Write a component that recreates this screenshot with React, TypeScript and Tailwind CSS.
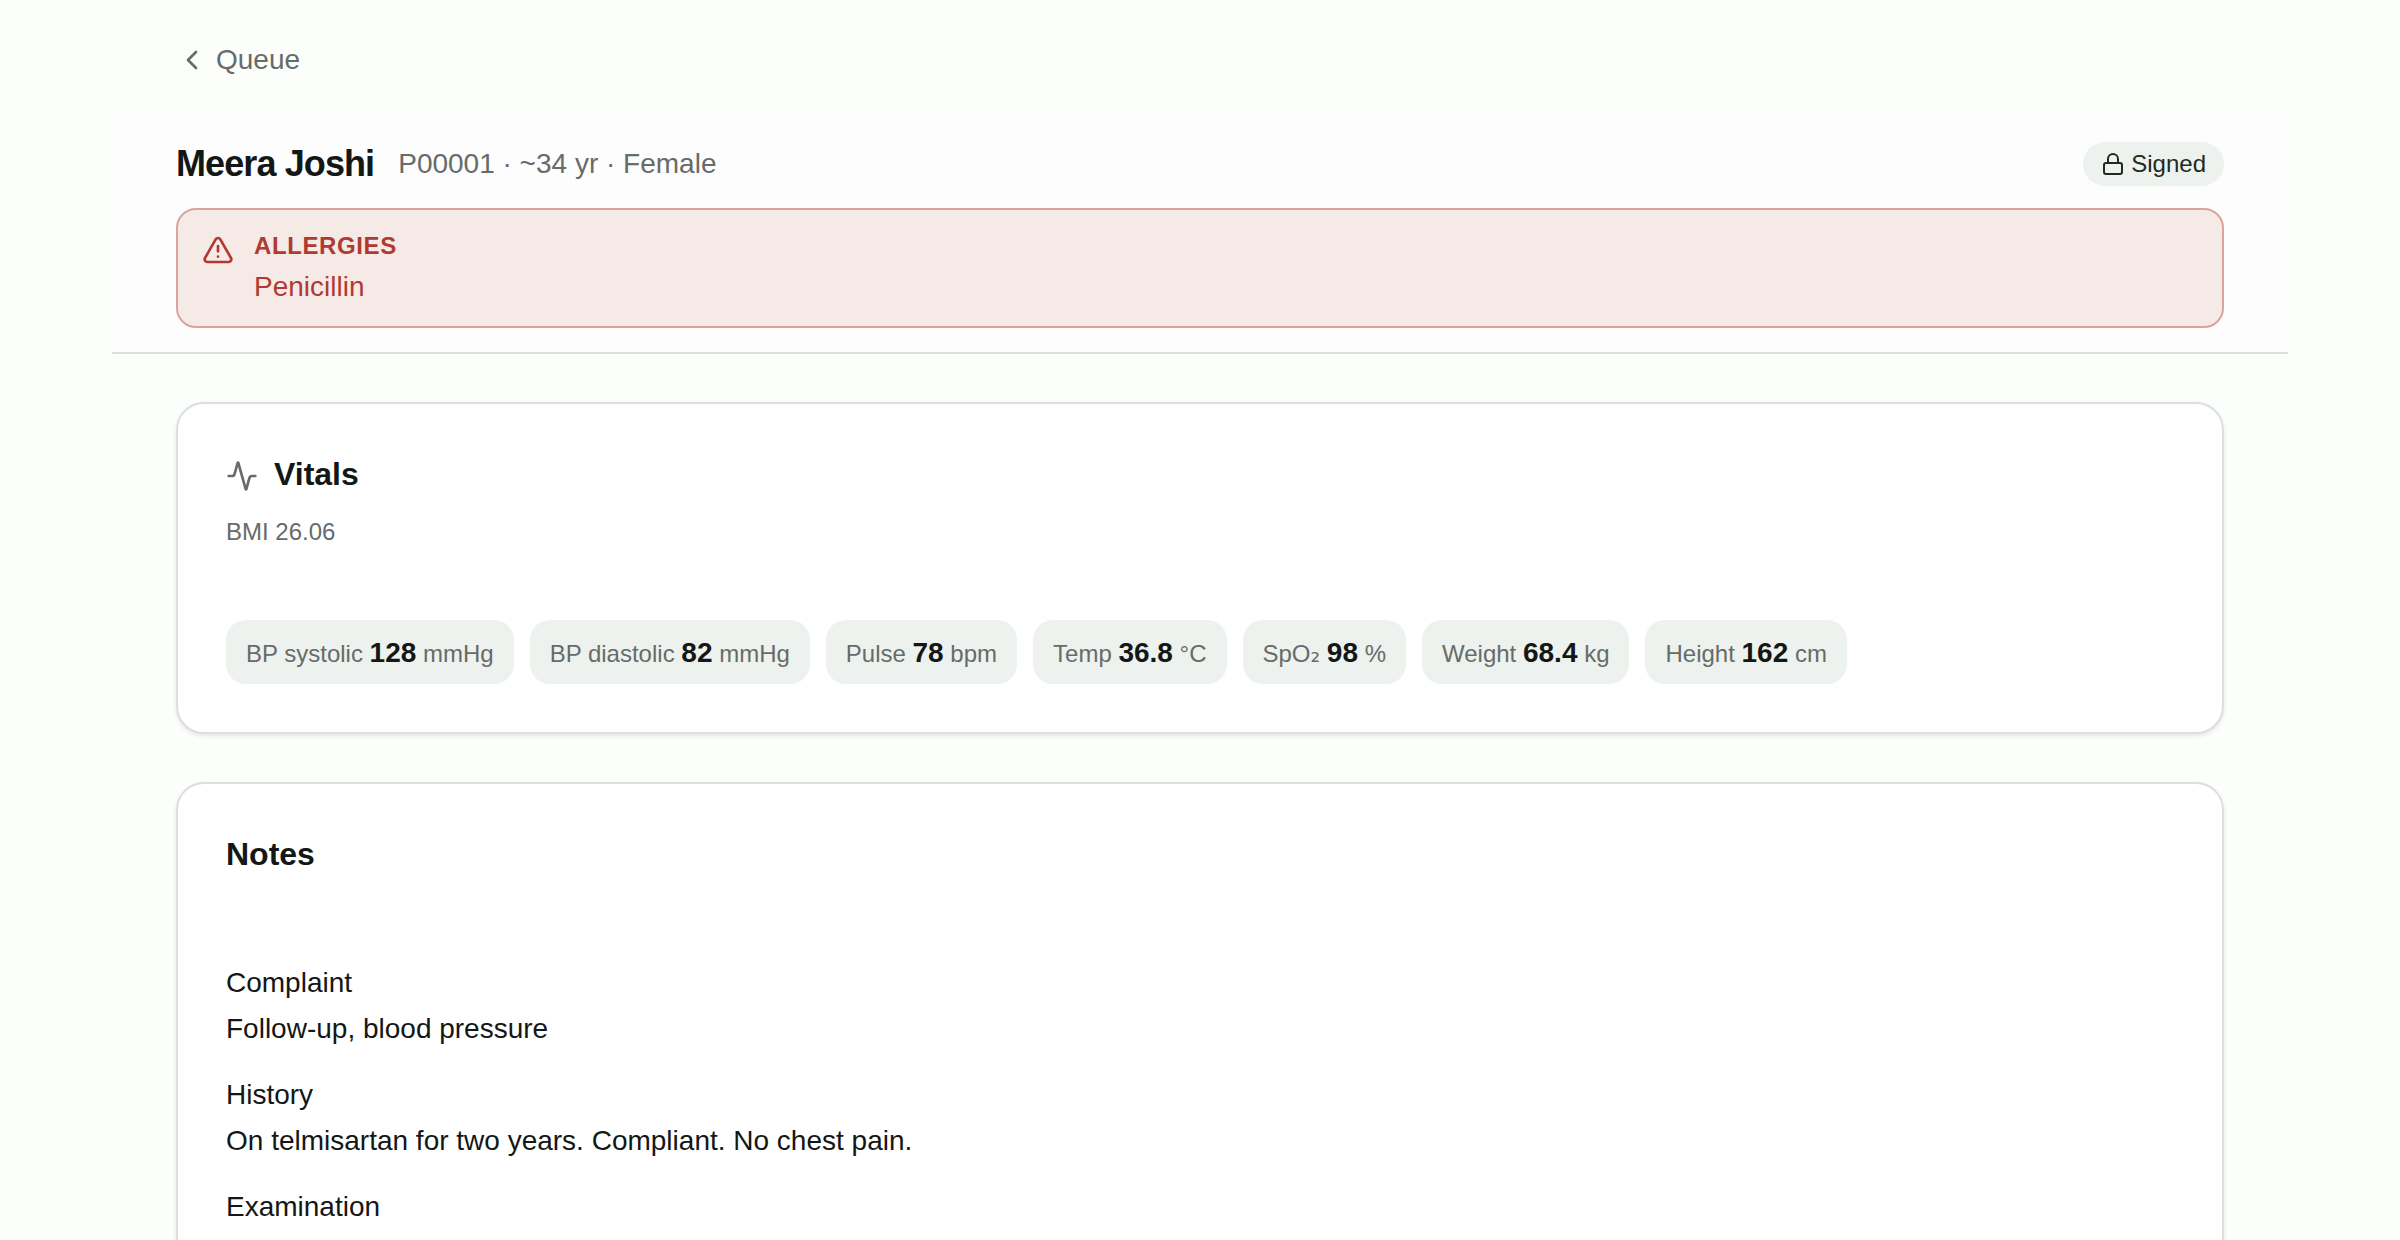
import type { ReactNode } from "react";
import { Activity, ChevronLeft, Lock, TriangleAlert } from "lucide-react";

type Vital = { id: string; label: ReactNode; value: string; unit: string };

const vitals: Vital[] = [
  { id: "systolic", label: "BP systolic", value: "128", unit: "mmHg" },
  { id: "diastolic", label: "BP diastolic", value: "82", unit: "mmHg" },
  { id: "pulse", label: "Pulse", value: "78", unit: "bpm" },
  { id: "temp", label: "Temp", value: "36.8", unit: "°C" },
  {
    id: "spo2",
    label: <>SpO<span className="font-['DejaVu_Sans',sans-serif]">₂</span></>,
    value: "98",
    unit: "%",
  },
  { id: "weight", label: "Weight", value: "68.4", unit: "kg" },
  { id: "height", label: "Height", value: "162", unit: "cm" },
];

const notes = [
  { label: "Complaint", text: "Follow-up, blood pressure" },
  { label: "History", text: "On telmisartan for two years. Compliant. No chest pain." },
  { label: "Examination", text: "" },
];

function Card({ children }: { children: ReactNode }) {
  return (
    <section className="rounded-[28px] border-2 border-[#dcdfdd] bg-white p-12 shadow-[0_2px_4px_rgba(0,0,0,0.1)]">
      {children}
    </section>
  );
}

export default function App() {
  return (
    <div className="h-screen overflow-hidden bg-[#fcfefb] font-['Liberation_Sans',sans-serif] text-[28px] leading-[42px] text-[#131715]">
      <main className="mx-auto max-w-[2176px] px-16 pt-6">
        <nav className="mb-4 flex">
          <a href="#queue" className="flex h-[72px] items-center gap-2 text-[#676b69]">
            <ChevronLeft className="size-8" />
            Queue
          </a>
        </nav>

        <header className="-mx-16 border-b-2 border-[#dcdfdd] bg-[#fdfdfd] px-16 py-6">
          <div className="mb-4 flex h-14 items-center justify-between">
            <div className="flex items-center gap-6">
              <h1 className="text-4xl leading-[56px] font-bold tracking-tight">Meera Joshi</h1>
              <p className="text-[#676b69]">P00001 · ~34 yr · Female</p>
            </div>
            <span className="flex h-11 items-center gap-1.5 rounded-full bg-[#edf2ee] px-[18px] text-2xl text-[#1f2a24]">
              <Lock className="size-6" />
              Signed
            </span>
          </div>
          <div role="alert" className="flex gap-5 rounded-[20px] border-2 border-[#dba39d] bg-[#f6eae7] px-6 pt-4 pb-[18px] text-[#b03a33]">
            <TriangleAlert className="mt-2 size-8" />
            <div>
              <h2 className="text-2xl leading-10 font-bold tracking-wide">ALLERGIES</h2>
              <p>Penicillin</p>
            </div>
          </div>
        </header>

        <div className="flex flex-col gap-12 pt-12">
          <Card>
            <div className="flex items-end gap-4">
              <Activity className="mb-1 size-8 text-[#676b69]" />
              <h2 className="text-[32px] leading-[44px] font-bold">Vitals</h2>
            </div>
            <p className="mt-4 text-2xl leading-10 text-[#676b69]">BMI 26.06</p>
            <ul className="mt-17 flex flex-wrap gap-4">
              {vitals.map((v) => (
                <li key={v.id} className="h-16 rounded-[20px] bg-[#edf2ee] px-5 text-2xl leading-[66px] text-[#676b69]">
                  {v.label} <strong className="text-[28px] text-[#131715]">{v.value}</strong> {v.unit}
                </li>
              ))}
            </ul>
          </Card>

          <Card>
            <h2 className="text-[32px] leading-[44px] font-bold">Notes</h2>
            <dl className="mt-21 flex flex-col gap-5 leading-[46px]">
              {notes.map((n) => (
                <div key={n.label}>
                  <dt>{n.label}</dt>
                  <dd>{n.text}</dd>
                </div>
              ))}
            </dl>
          </Card>
        </div>
      </main>
    </div>
  );
}
